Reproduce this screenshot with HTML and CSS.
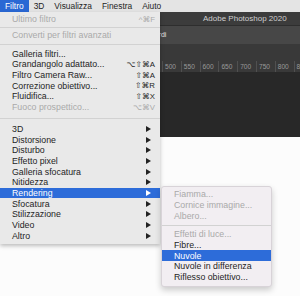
FILE: index.html
```html
<!DOCTYPE html>
<html>

<head>
    <meta charset="utf-8" />
    <title>Filtro - Rendering</title>
    <meta name="viewport" content="width=device-width, initial-scale=1">
    <link rel="stylesheet" href="styles.css">
</head>

<body>
    <div class="menubar">
        <span class="menubar-item active">Filtro</span>
        <span class="menubar-item">3D</span>
        <span class="menubar-item">Visualizza</span>
        <span class="menubar-item">Finestra</span>
        <span class="menubar-item">Aiuto</span>
    </div>

    <div class="desktop">
        <div class="ps-window">
            <div class="ps-title">Adobe Photoshop 2020</div>
            <div class="ps-options"><span class="ps-options-text">Bordi</span></div>
            <div class="ps-ruler">
                <span>500</span><span>550</span><span>600</span><span>650</span>
                <span>700</span><span>750</span><span>800</span><span>8</span>
            </div>
            <div class="ps-canvas"></div>
        </div>

        <div class="menu main-menu">
            <div class="item disabled"><span>Ultimo filtro</span><span class="keys">^⌘F</span></div>
            <div class="sep sep-tight"></div>
            <div class="item disabled"><span>Converti per filtri avanzati</span></div>
            <div class="sep"></div>
            <div class="item"><span>Galleria filtri...</span></div>
            <div class="item"><span>Grandangolo adattato...</span><span class="keys">⌥⇧⌘A</span></div>
            <div class="item"><span>Filtro Camera Raw...</span><span class="keys">⇧⌘A</span></div>
            <div class="item"><span>Correzione obiettivo...</span><span class="keys">⇧⌘R</span></div>
            <div class="item"><span>Fluidifica...</span><span class="keys">⇧⌘X</span></div>
            <div class="item disabled"><span>Fuoco prospettico...</span><span class="keys">⌥⌘V</span></div>
            <div class="sep sep-wide"></div>
            <div class="item"><span>3D</span><span class="arrow"></span></div>
            <div class="item"><span>Distorsione</span><span class="arrow"></span></div>
            <div class="item"><span>Disturbo</span><span class="arrow"></span></div>
            <div class="item"><span>Effetto pixel</span><span class="arrow"></span></div>
            <div class="item"><span>Galleria sfocatura</span><span class="arrow"></span></div>
            <div class="item"><span>Nitidezza</span><span class="arrow"></span></div>
            <div class="item selected"><span>Rendering</span><span class="arrow"></span></div>
            <div class="item"><span>Sfocatura</span><span class="arrow"></span></div>
            <div class="item"><span>Stilizzazione</span><span class="arrow"></span></div>
            <div class="item"><span>Video</span><span class="arrow"></span></div>
            <div class="item"><span>Altro</span><span class="arrow"></span></div>
        </div>

        <div class="menu sub-menu">
            <div class="item disabled"><span>Fiamma...</span></div>
            <div class="item disabled"><span>Cornice immagine...</span></div>
            <div class="item disabled"><span>Albero...</span></div>
            <div class="sep"></div>
            <div class="item disabled"><span>Effetti di luce...</span></div>
            <div class="item"><span>Fibre...</span></div>
            <div class="item selected"><span>Nuvole</span></div>
            <div class="item"><span>Nuvole in differenza</span></div>
            <div class="item"><span>Riflesso obiettivo...</span></div>
        </div>
    </div>
</body>

</html>
```

FILE: styles.css
```css
body {
    margin: 0;
    width: 300px;
    height: 296px;
    overflow: hidden;
    background-color: #fcfcfc;
    font-family: 'Liberation Sans', Arial, 'DejaVu Sans', sans-serif;
    color: #1e1e1e;
}

.menubar {
    display: flex;
    height: 12px;
    background-color: #e4e4e4;
    font-size: 8.4px;
    line-height: 12px;
}

.menubar-item {
    padding: 0 5px;
}

.menubar-item.active {
    background-color: #2a68d4;
    color: white;
}

.desktop {
    position: relative;
    height: 284px;
}

/* photoshop window behind the menus */
.ps-window {
    display: flex;
    flex-direction: column;
    background-color: #2a2a2a;
}

.ps-title {
    height: 13px;
    background-color: #3c3c3c;
    color: #cfcfcf;
    font-size: 8px;
    line-height: 13px;
    padding-left: 203px;
    border-bottom: 1px solid #2e2e2e;
}

.ps-options {
    height: 18px;
    background-color: #474747;
    color: #e0e0e0;
    font-size: 7px;
    line-height: 18px;
}

.ps-options-text {
    padding-left: 150px;
}

.ps-ruler {
    display: flex;
    align-items: flex-end;
    height: 28px;
    background-color: #393939;
    color: #9a9a9a;
    font-size: 6.6px;
    line-height: 11px;
    overflow: hidden;
    padding-left: 162px;
}

.ps-ruler span {
    flex: 0 0 18.8px;
    box-sizing: border-box;
    padding-left: 2px;
    border-left: 1px solid #505050;
}

.ps-canvas {
    height: 65px;
    background-color: #282828;
}

/* menus */
.menu {
    position: absolute;
    box-sizing: border-box;
    font-size: 8.8px;
}

.main-menu {
    top: 0;
    left: 0;
    width: 160px;
    padding: 2px 0 3px;
    background-color: #e9e9e9;
    box-shadow: 0 2px 4px rgba(0, 0, 0, 0.25);
}

.sub-menu {
    top: 174px;
    left: 161px;
    width: 111px;
    padding: 2px 0 3px;
    background-color: #f2eef2;
    border: 1px solid #d8d3d8;
    border-radius: 3px;
    box-shadow: 0 3px 6px rgba(0, 0, 0, 0.2);
}

.item {
    display: flex;
    justify-content: space-between;
    align-items: center;
    height: 10.7px;
    padding: 0 5px 0 12px;
    white-space: nowrap;
}

.item.disabled {
    color: #a9a9a9;
}

.item.selected {
    background-color: #2d6cd9;
    color: white;
}

.keys {
    font-size: 7.8px;
}

.arrow {
    width: 0;
    height: 0;
    margin-right: 4px;
    border-left: 5px solid #222;
    border-top: 3px solid transparent;
    border-bottom: 3px solid transparent;
}

.item.selected .arrow {
    border-left-color: white;
}

.sep {
    height: 1px;
    margin: 3.5px 0;
    background-color: #d2d2d2;
}

.sep-tight {
    margin: 2px 0;
}

.sep-wide {
    margin: 5px 0;
}
```
